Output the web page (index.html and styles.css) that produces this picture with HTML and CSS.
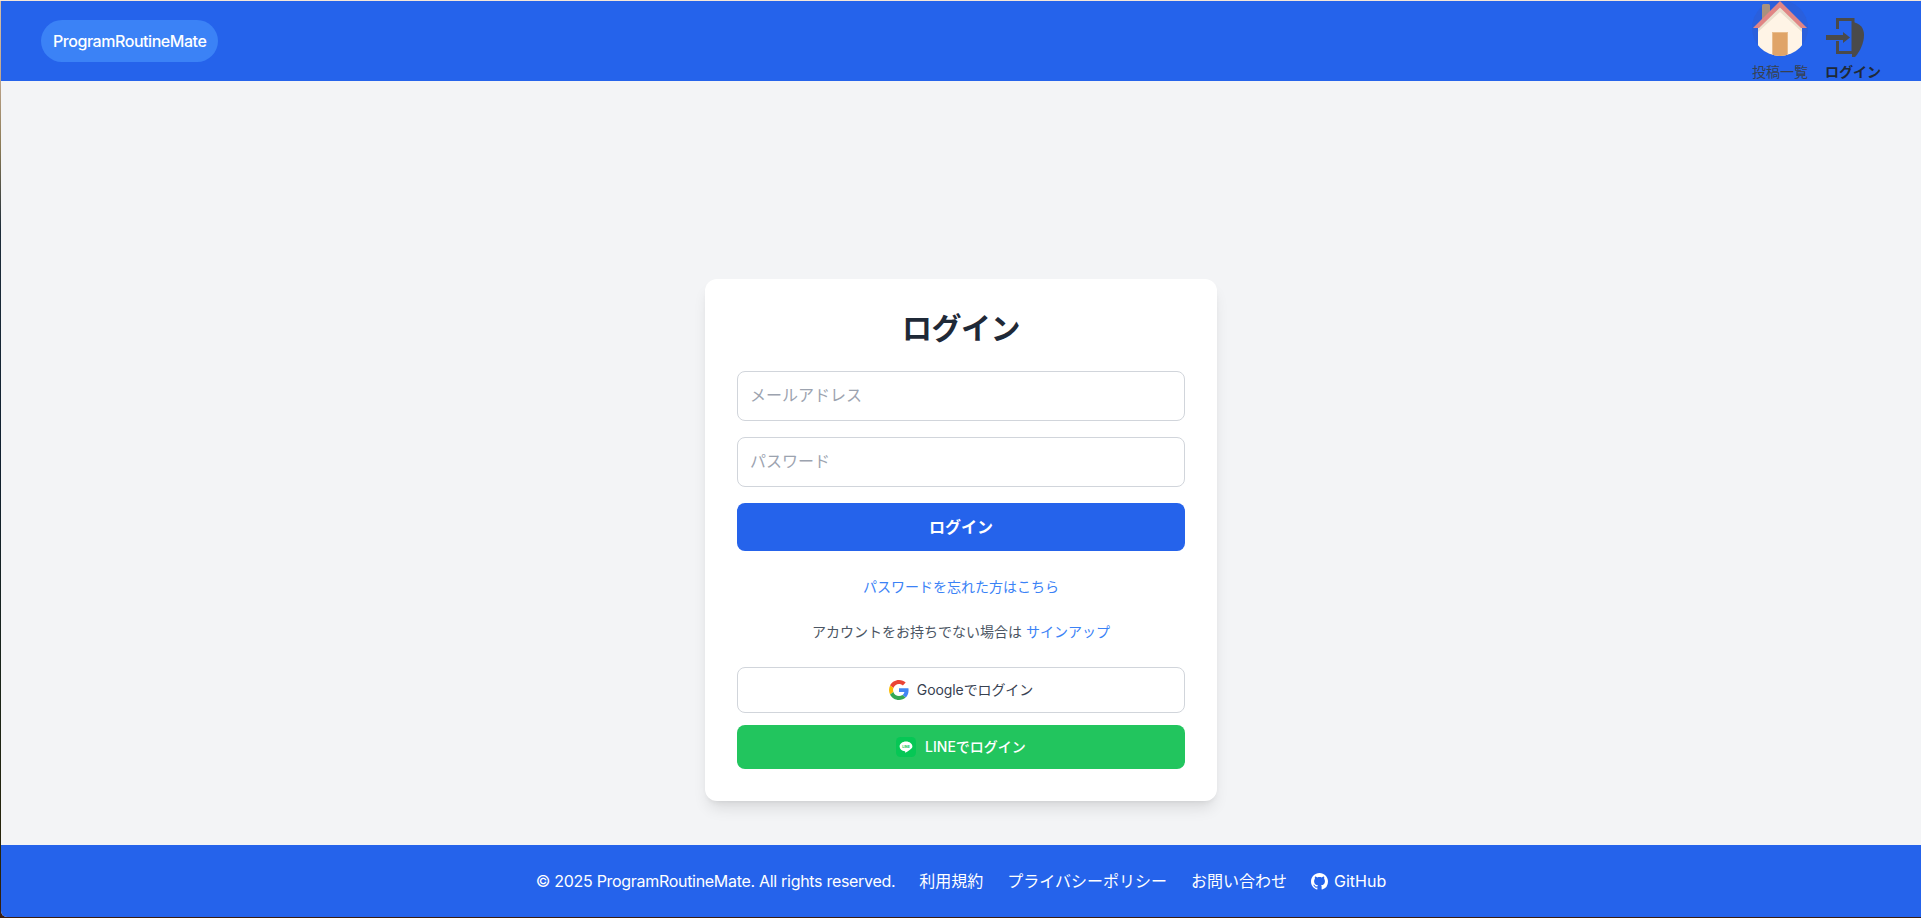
FILE: index.html
```html
<!DOCTYPE html>
<html lang="ja">
<head>
<meta charset="utf-8">
<title>ProgramRoutineMate</title>
<link rel="stylesheet" href="styles.css">
</head>
<body>
<div class="page">
  <header class="header">
    <a class="brand" href="#">ProgramRoutineMate</a>
    <nav class="nav">
      <a class="nav-item" href="#">
        <svg class="nav-icon" viewBox="0 0 56 56" aria-hidden="true">
          <circle cx="28" cy="27" r="28" fill="#2a5fdc"/>
          <rect x="10" y="3" width="8" height="16" rx="1.5" fill="#a8917f"/>
          <clipPath id="homeclip"><circle cx="28" cy="27" r="28"/></clipPath>
          <g clip-path="url(#homeclip)">
            <path d="M6 26 28 6l22 20v30H6z" fill="#fff4e6"/>
            <path d="M28 6 6 26v5L28 11l22 20v-5z" fill="#eadfce"/>
            <rect x="20" y="31" width="16" height="25" fill="#e9bd8d"/>
            <rect x="21" y="32" width="14" height="24" fill="#e0a468"/>
          </g>
          <path d="M28 0 1 27h6L28 6.500 49 27h6z" fill="#e08585"/>
        </svg>
        <span class="nav-label">投稿一覧</span>
      </a>
      <a class="nav-item nav-item-current" href="#">
        <svg class="nav-icon" viewBox="0 0 56 56" aria-hidden="true">
          <path d="M12.500 28V18.500H28V51.500H12.500V40" fill="none" stroke="#4a4a4a" stroke-width="3"/>
          <path d="M27 21c8 1 12 6 12 13 0 9-5 19-12 25z" fill="#4a4a4a"/>
          <path d="M1 34h17v-3l7 5.500-7 5.500v-3H1z" fill="#4a4a4a"/>
        </svg>
        <span class="nav-label">ログイン</span>
      </a>
    </nav>
  </header>

  <main class="main">
    <section class="card">
      <h1 class="title">ログイン</h1>
      <form class="form">
        <input class="field" type="email" placeholder="メールアドレス">
        <input class="field" type="password" placeholder="パスワード">
        <button class="submit" type="button">ログイン</button>
      </form>
      <p class="forgot"><a class="link" href="#">パスワードを忘れた方はこちら</a></p>
      <p class="signup">アカウントをお持ちでない場合は <a class="link" href="#">サインアップ</a></p>
      <div class="social">
        <a class="social-btn google" href="#">
          <svg class="social-icon" viewBox="0 0 48 48" aria-hidden="true">
            <path fill="#EA4335" d="M24 9.500c3.540 0 6.710 1.220 9.210 3.600l6.850-6.850C35.900 2.380 30.470 0 24 0 14.620 0 6.510 5.380 2.560 13.220l7.980 6.190C12.430 13.720 17.740 9.500 24 9.500z"/>
            <path fill="#4285F4" d="M46.980 24.550c0-1.570-.15-3.090-.38-4.550H24v9.020h12.940c-.58 2.960-2.260 5.480-4.780 7.180l7.730 6c4.510-4.180 7.090-10.360 7.090-17.650z"/>
            <path fill="#FBBC05" d="M10.530 28.590c-.48-1.450-.76-2.990-.76-4.590s.27-3.140.76-4.590l-7.980-6.190C.92 16.460 0 20.120 0 24c0 3.880.92 7.540 2.560 10.780l7.970-6.190z"/>
            <path fill="#34A853" d="M24 48c6.480 0 11.930-2.130 15.890-5.810l-7.730-6c-2.150 1.450-4.920 2.300-8.160 2.300-6.260 0-11.570-4.220-13.470-9.910l-7.980 6.190C6.510 42.620 14.620 48 24 48z"/>
          </svg>
          <span class="google-label">Googleでログイン</span>
        </a>
        <a class="social-btn line" href="#">
          <svg class="social-icon" viewBox="0 0 20 20" aria-hidden="true">
            <rect width="20" height="20" rx="4.500" fill="#06c755"/>
            <path d="M10 4.500c-3.600 0-6.400 2.200-6.400 4.900 0 2.400 2.200 4.400 5.200 4.800.5.100.4.500.3 1-.1.500.2.600.6.400 1.800-1 4.100-2.400 5.400-3.800.9-.9 1.300-1.600 1.300-2.400 0-2.700-2.800-4.900-6.400-4.900z" fill="#fff"/>
            <text class="line-mark" x="10" y="10.800" text-anchor="middle">LINE</text>
          </svg>
          <span>LINEでログイン</span>
        </a>
      </div>
    </section>
  </main>

  <footer class="footer">
    <span class="copyright">© 2025 ProgramRoutineMate. All rights reserved.</span>
    <a class="footer-link" href="#">利用規約</a>
    <a class="footer-link" href="#">プライバシーポリシー</a>
    <a class="footer-link" href="#">お問い合わせ</a>
    <a class="footer-link github" href="#">
      <svg class="github-icon" viewBox="0 0 16 16" aria-hidden="true"><path fill="#fff" d="M8 0C3.580 0 0 3.580 0 8c0 3.540 2.290 6.530 5.470 7.590.4.070.55-.17.55-.38 0-.19-.01-.82-.01-1.490-2.010.37-2.530-.49-2.690-.94-.09-.23-.48-.94-.82-1.130-.28-.15-.68-.52-.01-.53.630-.01 1.080.58 1.230.82.720 1.210 1.870.87 2.330.66.070-.52.280-.87.510-1.070-1.780-.2-3.640-.89-3.640-3.950 0-.87.310-1.590.82-2.150-.08-.2-.36-1.020.08-2.120 0 0 .67-.21 2.200.82.640-.18 1.320-.27 2-.27s1.360.09 2 .27c1.530-1.040 2.200-.82 2.200-.82.440 1.100.16 1.920.08 2.120.51.560.82 1.270.82 2.150 0 3.070-1.870 3.750-3.650 3.950.29.250.54.730.54 1.480 0 1.070-.01 1.930-.01 2.200 0 .21.150.46.550.38A8.010 8.010 0 0 0 16 8c0-4.420-3.580-8-8-8z"/></svg>
      <span>GitHub</span>
    </a>
  </footer>
</div>
</body>
</html>
```

FILE: styles.css
```css
* { box-sizing: border-box; }

html, body { height: 100%; }

body {
  margin: 0;
  padding: 1px 0 1px 1px;
  overflow: hidden;
  background:
    linear-gradient(180deg, #f5e6d8 0, #f5e6d8 1px, transparent 1px) top / 100% 1px no-repeat,
    linear-gradient(180deg, #d4bfa8 0, #c2a890 8%, #8a7a55 16%, #1c2c3a 25%, #102030 50%, #1a2418 75%, #2a2408 95%, #3a1c10 100%);
  font-family: Inter, "Noto Sans CJK JP", sans-serif;
  color: #1f2937;
}

a { text-decoration: none; color: inherit; }

.page {
  height: 100%;
  display: flex;
  flex-direction: column;
  background: #f3f4f6;
  border-bottom-left-radius: 6px;
  overflow: hidden;
}

.header {
  flex: 0 0 80px;
  height: 80px;
  display: flex;
  align-items: center;
  justify-content: space-between;
  padding: 0 40px;
  background: #2563eb;
  overflow: hidden;
}

.brand {
  padding: 9px 12px;
  border-radius: 21px;
  background: #3b82f6;
  color: #fff;
  font-size: 16px;
  line-height: 24px;
  font-weight: 500;
  letter-spacing: -.45px;
}

.nav {
  align-self: flex-start;
  display: flex;
  gap: 17px;
}

.nav-item {
  display: flex;
  flex-direction: column;
  align-items: center;
  width: 56px;
  color: #374151;
}

.nav-item-current {
  color: #1f2937;
  font-weight: 700;
}

.nav-icon {
  display: block;
  width: 56px;
  height: 56px;
}

.nav-label {
  margin-top: 7px;
  font-size: 14px;
  line-height: 16px;
  white-space: nowrap;
}

.main {
  flex: 1;
  display: flex;
  justify-content: center;
  align-items: flex-start;
  padding-top: 198px;
}

.card {
  width: 512px;
  padding: 31px 32px 32px;
  background: #fff;
  border-radius: 12px;
  box-shadow: 0 10px 15px -3px rgba(0, 0, 0, .1), 0 4px 6px -4px rgba(0, 0, 0, .1);
}

.title {
  margin: 0 0 25px;
  font-size: 30px;
  line-height: 36px;
  font-weight: 700;
  text-align: center;
  letter-spacing: -.5px;
  color: #1f2937;
}

.form {
  display: flex;
  flex-direction: column;
  gap: 16px;
}

.field {
  display: block;
  width: 100%;
  height: 50px;
  padding: 0 12px 2px;
  border: 1px solid #d1d5db;
  border-radius: 8px;
  background: #fff;
  font: inherit;
  font-size: 16px;
  color: #1f2937;
}

.field::placeholder { color: #9ca3af; opacity: 1; }

.submit {
  height: 48px;
  padding: 0 0 3px;
  border: 0;
  border-radius: 8px;
  background: #2563eb;
  color: #fff;
  font: inherit;
  font-size: 16px;
  font-weight: 700;
}

.forgot, .signup {
  margin: 0;
  font-size: 14px;
  line-height: 20px;
  text-align: center;
}

.forgot { margin-top: 26px; }

.signup {
  margin-top: 25px;
  color: #4b5563;
}

.link { color: #3b82f6; }

.social {
  margin-top: 25px;
  display: flex;
  flex-direction: column;
  gap: 12px;
}

.social-btn {
  display: flex;
  align-items: center;
  justify-content: center;
  border-radius: 8px;
  font-size: 14px;
  line-height: 20px;
}

.google {
  height: 46px;
  gap: 8px;
  border: 1px solid #d1d5db;
  background: #fff;
  color: #374151;
}

.google-label { letter-spacing: -.1px; }

.line {
  height: 44px;
  gap: 9px;
  background: #22c55e;
  color: #fff;
  font-weight: 500;
}

.social-icon {
  display: block;
  width: 20px;
  height: 20px;
}

.line-mark {
  font-size: 3.400px;
  font-weight: 700;
  fill: #06c755;
}

.footer {
  flex: 0 0 72px;
  display: flex;
  align-items: center;
  justify-content: center;
  gap: 24px;
  background: #2563eb;
  color: #fff;
  font-size: 16px;
  line-height: 24px;
}

.copyright { letter-spacing: -.3px; }

.github {
  display: flex;
  align-items: center;
  gap: 6px;
}

.github-icon {
  display: block;
  width: 17px;
  height: 17px;
}
```
